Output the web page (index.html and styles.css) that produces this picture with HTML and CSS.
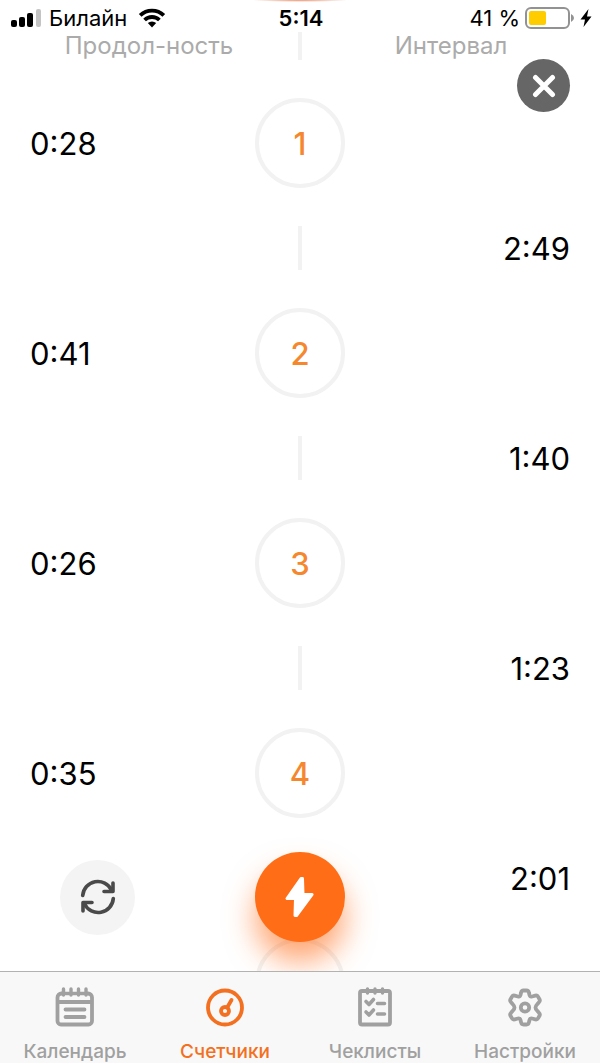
FILE: index.html
```html
<!DOCTYPE html>
<html lang="ru">
<head>
<meta charset="utf-8">
<meta name="viewport" content="width=device-width, initial-scale=1">
<title>Счетчики</title>
<link rel="stylesheet" href="styles.css">
</head>
<body>
<div class="app">
  <header class="status">
    <div class="status-side">
      <svg class="signal" width="32" height="20" viewBox="0 0 32 20" aria-hidden="true">
        <rect x="1" y="12" width="6" height="7" rx="2"/>
        <rect x="9" y="9" width="6" height="10" rx="2"/>
        <rect x="17" y="5" width="6" height="14" rx="2"/>
        <rect x="26" y="1" width="5" height="18" rx="2" fill="#c4c4c4"/>
      </svg>
      <span class="carrier">Билайн</span>
      <svg class="wifi" width="28" height="20" viewBox="0 0 28 20" aria-hidden="true">
        <g fill="none" stroke="#000" stroke-width="3.8">
          <path d="M2.200 7.400A16.800 16.800 0 0 1 25.800 7.400"/>
          <path d="M6.600 12A10.600 10.600 0 0 1 21.400 12"/>
        </g>
        <path d="M9.800 15.100a6 6 0 0 1 8.400 0L14 19.400z"/>
      </svg>
    </div>
    <time class="clock">5:14</time>
    <div class="status-side status-right">
      <span>41 %</span>
      <svg width="50" height="22" viewBox="0 0 50 22" aria-hidden="true">
        <rect x="1" y="1" width="43" height="20" rx="5" fill="#fff" stroke="#929292" stroke-width="2"/>
        <rect x="4" y="4" width="17" height="14" rx="2" fill="#fc0"/>
        <path d="M46 7q3 1.500 3 4t-3 4z" fill="#929292"/>
      </svg>
      <svg class="charge" width="12" height="20" viewBox="0 0 12 20" aria-hidden="true">
        <path d="M8.500 1 .5 11.500h4.500L3.500 19 11.500 8.500H7z"/>
      </svg>
    </div>
  </header>

  <main class="screen">
    <div class="heads">
      <span>Продол-ность</span>
      <i class="line"></i>
      <span>Интервал</span>
    </div>
    <ol class="timeline">
      <li class="row count"><span class="time">0:28</span><b class="dot">1</b></li>
      <li class="row gap"><i class="line"></i><span class="time interval">2:49</span></li>
      <li class="row count"><span class="time">0:41</span><b class="dot">2</b></li>
      <li class="row gap"><i class="line"></i><span class="time interval">1:40</span></li>
      <li class="row count"><span class="time">0:26</span><b class="dot">3</b></li>
      <li class="row gap"><i class="line"></i><span class="time interval">1:23</span></li>
      <li class="row count"><span class="time">0:35</span><b class="dot">4</b></li>
      <li class="row gap"><i class="line"></i><span class="time interval">2:01</span></li>
      <li class="row count"><span class="time">0:36</span><b class="dot">5</b></li>
    </ol>

    <button class="close" type="button" aria-label="Закрыть">
      <svg width="24" height="24" viewBox="0 0 24 24" aria-hidden="true"><path d="M3.500 3.500l17 17M20.500 3.500l-17 17" fill="none" stroke="#fff" stroke-width="5" stroke-linecap="round"/></svg>
    </button>

    <div class="dock">
      <button class="reset" type="button" aria-label="Сбросить">
        <svg width="36" height="36" viewBox="0 0 36 36" fill="none" stroke="#4a4a4a" stroke-width="3.600" stroke-linecap="round" stroke-linejoin="round" aria-hidden="true">
          <path d="M2.700 16.500A15.200 15.200 0 0 1 31.500 11M33.300 19.500A15.200 15.200 0 0 1 4.500 25"/>
          <path d="M33 4v8.500H24M3 32V23.500H12"/>
          <path d="M33 7v5.500h-6zM3 29v-5.500h6z" fill="#4a4a4a" stroke="none"/>
        </svg>
      </button>
      <button class="start" type="button" aria-label="Старт">
        <svg width="30" height="42" viewBox="0 0 30 42" aria-hidden="true"><path d="M16 2.500 2 22.500h8.500L10 39.500h1.500L27 18.500h-9L17.500 2.500z" fill="#fff" stroke="#fff" stroke-width="3" stroke-linejoin="round"/></svg>
      </button>
    </div>
  </main>

  <nav class="tabs">
    <a class="tab" href="#calendar">
      <svg width="40" height="40" viewBox="0 0 40 40" aria-hidden="true">
        <g fill="none" stroke="currentColor" stroke-width="3.800" stroke-linecap="round">
          <path d="M6.500 6.500A4 4 0 0 0 2.500 10.500V34a3.500 3.500 0 0 0 3.500 3.500h27.500A3.500 3.500 0 0 0 37 34V10.500a4 4 0 0 0-4-4M3 15h34M10.500 22.500h19M10.500 30h19"/>
          <path d="M8.500 2v6M16 2v6M23.500 2v6M31 2v6M6.500 6.500H33" stroke-width="3.400"/>
        </g>
      </svg>
      <span>Календарь</span>
    </a>
    <a class="tab active" href="#counters" aria-current="page">
      <svg width="40" height="40" viewBox="0 0 40 40" fill="none" stroke="currentColor" stroke-width="3.800" stroke-linecap="round" aria-hidden="true">
        <circle cx="20" cy="20.500" r="17"/><circle cx="20" cy="24" r="4"/><path d="M22.200 20.500 26.500 13"/>
      </svg>
      <span>Счетчики</span>
    </a>
    <a class="tab" href="#checklists">
      <svg width="40" height="40" viewBox="0 0 40 40" fill="none" stroke="currentColor" stroke-width="3.800" stroke-linecap="round" stroke-linejoin="round" aria-hidden="true">
        <rect x="5" y="4" width="30" height="33.500" rx="2"/>
        <path d="M12.500 2v4M20 2v4M27.500 2v4" stroke-width="3.400"/>
        <path d="M11 14.500l3 3 4.500-5M11 25l3 3 4.500-5M22.500 16.500h7M22.500 27h7" stroke-width="3.600"/>
      </svg>
      <span>Чеклисты</span>
    </a>
    <a class="tab" href="#settings">
      <svg width="40" height="40" viewBox="0 0 40 40" fill="none" stroke="currentColor" stroke-width="3.800" stroke-linejoin="round" aria-hidden="true">
        <circle cx="20" cy="20.500" r="4.200"/>
        <path d="M18.500 3.500h3q2 0 2.400 2l.6 2.500q.6 2 2.600 1.500l3.200-.9q1.900-.4 2.700 1l1.500 2.600q.9 1.700-.5 3l-2 2.300q-1.500 1.500-1.500 3t1.500 3l2 2.300q1.400 1.300.5 3l-1.500 2.600q-.8 1.400-2.700 1l-3.200-.9q-2-.5-2.600 1.500l-.6 2.500q-.4 2-2.400 2h-3q-2 0-2.400-2l-.6-2.500q-.6-2-2.600-1.500l-3.200.9q-1.900.4-2.700-1l-1.500-2.600q-.9-1.700.5-3l2-2.300q1.500-1.500 1.500-3t-1.500-3l-2-2.300q-1.400-1.300-.5-3l1.500-2.600q.8-1.400 2.700-1l3.200.9q2 .5 2.600-1.500l.6-2.500q.4-2 2.400-2z"/>
      </svg>
      <span>Настройки</span>
    </a>
  </nav>
</div>
</body>
</html>
```
FILE: styles.css
```css
* { box-sizing: border-box; }

body {
  margin: 0;
  background: #fff;
  color: #000;
  font-family: Inter, Roboto, "Liberation Sans", sans-serif;
}

button { border: 0; padding: 0; cursor: pointer; }

.app {
  display: flex;
  flex-direction: column;
  height: 100vh;
  overflow: hidden;
}

.status {
  display: grid;
  grid-template-columns: 1fr auto 1fr;
  align-items: center;
  height: 32px;
  padding: 4px 8px 0 10px;
  font-size: 22px;
  line-height: 28px;
  background: radial-gradient(ellipse 48px 2px at 50% 0, #e8906a, #fff) no-repeat;
}

.status-side { display: flex; align-items: center; gap: 7px; }
.status-right { justify-content: flex-end; gap: 5px; }
.wifi { margin-left: 4px; }
.clock { font-weight: 600; }

.screen {
  position: relative;
  flex: 1;
  min-height: 0;
  overflow: hidden;
}

.heads {
  display: grid;
  grid-template-columns: 1fr 4px 1fr;
  justify-items: center;
  margin-bottom: 38px;
  color: #ababab;
  font-size: 24px;
  line-height: 28px;
}

.timeline { margin: 0; padding: 0 30px; list-style: none; }

.row {
  display: grid;
  grid-template-columns: 1fr 90px 1fr;
  align-items: center;
  justify-items: center;
}

.count { height: 90px; }
.gap { height: 120px; }

.time {
  justify-self: start;
  padding-top: 2px;
  font-size: 31px;
  line-height: 40px;
}

.interval { justify-self: end; }

.dot {
  display: flex;
  align-items: center;
  justify-content: center;
  width: 90px;
  height: 90px;
  border: 4px solid #f2f2f2;
  border-radius: 50%;
  color: #f5872e;
  font-size: 31px;
  font-weight: 500;
}

.line {
  grid-column: 2;
  width: 4px;
  height: 44px;
  background: #f2f2f2;
}

.heads .line { height: 28px; }

.close {
  position: absolute;
  top: 27px;
  right: 30px;
  display: grid;
  place-items: center;
  width: 53px;
  height: 53px;
  border-radius: 50%;
  background: #666;
}

.dock {
  position: absolute;
  right: 0;
  bottom: 29px;
  left: 0;
  display: grid;
  grid-template-columns: 1fr 90px 1fr;
  align-items: center;
  padding: 0 60px;
}

.reset, .start {
  display: grid;
  place-items: center;
  border-radius: 50%;
}

.reset { width: 75px; height: 75px; background: #f4f4f4; }

.start {
  width: 90px;
  height: 90px;
  background: #ff6d17;
  box-shadow: 0 20px 30px rgba(255, 109, 23, 0.6);
}

.tabs {
  display: grid;
  grid-template-columns: repeat(4, 1fr);
  height: 92px;
  border-top: 1px solid #b2b2b2;
  background: #f8f8f8;
}

.tab {
  display: flex;
  flex-direction: column;
  align-items: center;
  gap: 13px;
  padding-top: 15px;
  color: #a0a0a0;
  font-size: 19px;
  font-weight: 500;
  line-height: 24px;
  text-decoration: none;
}

.active { color: #f37021; }
```
